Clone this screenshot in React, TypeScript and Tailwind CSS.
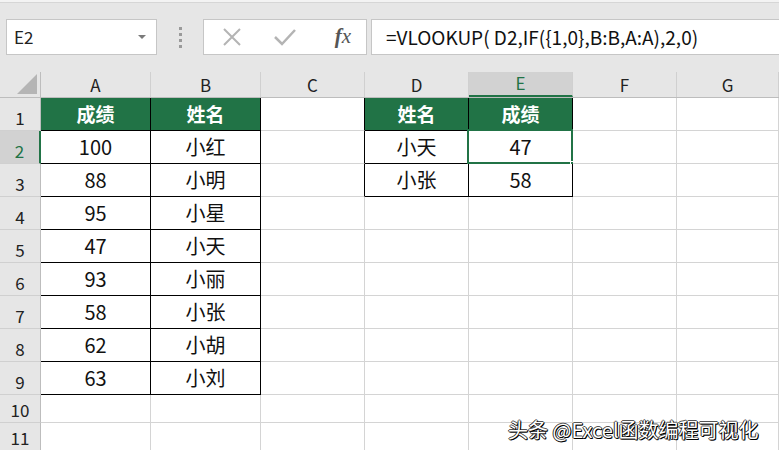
import React from "react";

const FONT = { fontFamily: '"Noto Sans CJK SC", "Noto Sans", sans-serif' };

const colWidths = [41, 110, 110, 104, 104, 104, 104, 102];
const colLetters = ["A", "B", "C", "D", "E", "F", "G"];
const formula = "=VLOOKUP( D2,IF({1,0},B:B,A:A),2,0)";

const tableAB: [string, string][] = [
  ["100", "小红"],
  ["88", "小明"],
  ["95", "小星"],
  ["47", "小天"],
  ["93", "小丽"],
  ["58", "小张"],
  ["62", "小胡"],
  ["63", "小刘"],
];

const lookup: [string, string][] = [
  ["小天", "47"],
  ["小张", "58"],
];

type Cell = { text?: string; head?: boolean; boxed?: boolean };

function getCell(row: number, col: number): Cell {
  // col 0 = A
  if (col <= 1 && row <= 9) {
    if (row === 1) return { text: col === 0 ? "成绩" : "姓名", head: true, boxed: true };
    const r = tableAB[row - 2];
    return { text: col === 0 ? r[0] : r[1], boxed: true };
  }
  if ((col === 3 || col === 4) && row <= 3) {
    if (row === 1) return { text: col === 3 ? "姓名" : "成绩", head: true, boxed: true };
    const r = lookup[row - 2];
    return { text: col === 3 ? r[0] : r[1], boxed: true };
  }
  return {};
}

function FormulaBar() {
  return (
    <div className="h-[72px] bg-[#e6e6e6] relative">
      <div className="h-[3px] bg-[#f3f3f3] border-b border-[#d6d6d6]" />
      <div className="flex items-start pl-[6px] pt-[16px]">
        <div className="w-[151px] h-[36px] bg-white border border-[#c6c6c6] flex items-center justify-between pl-[7px] pr-[10px]">
          <span className="text-[17px] text-[#222]">E2</span>
          <span className="w-0 h-0 border-l-[4px] border-r-[4px] border-t-[4px] border-l-transparent border-r-transparent border-t-[#7a7a7a]" />
        </div>
        <div className="w-[46px] h-[36px] flex flex-col items-center justify-center gap-[3px]">
          <span className="w-[3px] h-[3px] bg-[#9a9a9a]" />
          <span className="w-[3px] h-[3px] bg-[#9a9a9a]" />
          <span className="w-[3px] h-[3px] bg-[#9a9a9a]" />
          <span className="w-[3px] h-[3px] bg-[#9a9a9a]" />
        </div>
        <div className="w-[164px] h-[36px] bg-white border border-[#c6c6c6] flex items-center">
          <svg width="54" height="36" viewBox="0 0 54 36">
            <path d="M20 10 L36 26 M36 10 L20 26" stroke="#b4b4b4" strokeWidth="2" fill="none" />
          </svg>
          <svg width="54" height="36" viewBox="0 0 54 36">
            <path d="M17 18 L24 25 L37 11" stroke="#b4b4b4" strokeWidth="2.5" fill="none" />
          </svg>
          <span
            className="w-[54px] text-center text-[21px] italic text-[#555] pl-[8px]"
            style={{ fontFamily: '"Liberation Serif", serif' }}
          >
            <b>f</b>x
          </span>
        </div>
        <div className="ml-[4px] flex-1 h-[36px] bg-white border border-[#c6c6c6] border-r-0 flex items-center pl-[14px]">
          <span className="text-[19px] text-[#111]">{formula}</span>
        </div>
      </div>
    </div>
  );
}

function HeaderRow() {
  return (
    <div className="flex h-[26px] bg-[#e6e6e6] border-b border-[#bdbdbd]">
      <div className="w-[41px] shrink-0 relative border-r border-[#bdbdbd]">
        <svg className="absolute right-[3px] bottom-[3px]" width="20" height="20" viewBox="0 0 20 20">
          <polygon points="20,0 20,20 0,20" fill="#b5b5b5" />
        </svg>
      </div>
      {colLetters.map((l, i) => (
        <div
          key={l}
          style={{ width: colWidths[i + 1] }}
          className={
            "shrink-0 flex items-end justify-center text-[17px] leading-[24px] border-r border-[#d0d0d0] " +
            (l === "E" ? "bg-[#d2d2d2] text-[#217346] border-b-2 border-b-[#217346]" : "text-[#222]")
          }
        >
          {l}
        </div>
      ))}
    </div>
  );
}

function Row({ row }: { row: number }) {
  const h = row <= 9 ? 33 : 28;
  return (
    <div className="flex" style={{ height: h }}>
      <div
        className={
          "w-[41px] shrink-0 flex items-end justify-center text-[17px] border-b border-[#d0d0d0] " +
          (row === 2
            ? "bg-[#d2d2d2] text-[#217346] border-r-2 border-r-[#217346]"
            : "bg-[#e6e6e6] text-[#222] border-r border-r-[#bdbdbd]")
        }
      >
        <span className="leading-[25px]">{row}</span>
      </div>
      {colLetters.map((_, c) => {
        const cell = getCell(row, c);
        const right = getCell(row, c + 1);
        const below = getCell(row + 1, c);
        const rightBlack = cell.boxed || right.boxed;
        const bottomBlack = cell.boxed || below.boxed;
        const selected = row === 2 && c === 4;
        return (
          <div
            key={c}
            style={{ width: colWidths[c + 1] }}
            className={
              "shrink-0 relative flex items-center justify-center border-r border-b " +
              (rightBlack ? "border-r-black " : "border-r-[#d4d4d4] ") +
              (bottomBlack ? "border-b-black " : "border-b-[#d4d4d4] ") +
              (cell.head ? "bg-[#217346] text-white font-bold text-[19px]" : "bg-white text-[#111] text-[20px]")
            }
          >
            {cell.text}
            {selected && (
              <>
                <div className="absolute -left-[2px] -top-[2px] -right-[1px] -bottom-[1px] border-2 border-[#217346]" />
                <div className="absolute -right-[4px] -bottom-[4px] w-[6px] h-[6px] bg-[#217346] border border-white" />
              </>
            )}
          </div>
        );
      })}
    </div>
  );
}

export default function App() {
  const rows = Array.from({ length: 11 }, (_, i) => i + 1);
  return (
    <div className="w-[779px] h-[450px] overflow-hidden bg-white relative" style={FONT}>
      <FormulaBar />
      <HeaderRow />
      {rows.map((r) => (
        <Row key={r} row={r} />
      ))}
      <div
        className="absolute left-[508px] top-[415px] text-[20px] text-white whitespace-nowrap"
        style={{
          textShadow:
            "1px 1px 0 #000, -1px 0 0 #333, 0 -1px 0 #555, 1px 0 0 #222, 0 1px 0 #222",
        }}
      >
        头条 @Excel函数编程可视化
      </div>
    </div>
  );
}
